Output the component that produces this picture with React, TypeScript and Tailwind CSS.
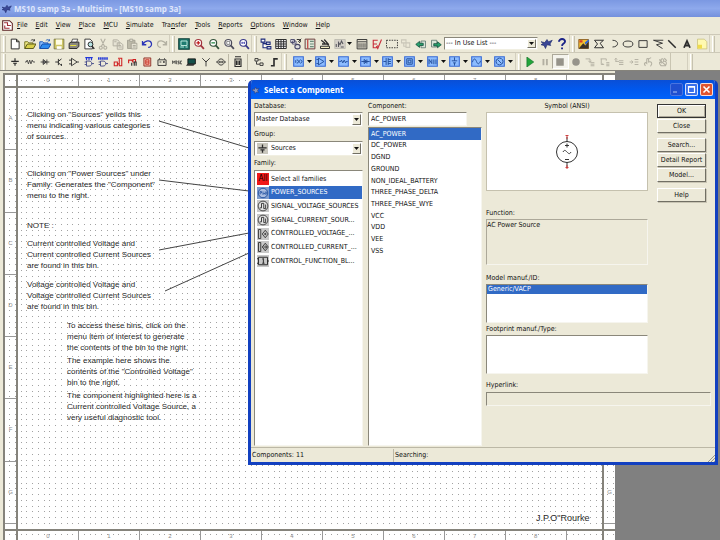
import React, { useState } from "react";
import clsx from "clsx";

const menus = ["File", "Edit", "View", "Place", "MCU", "Simulate", "Transfer", "Tools", "Reports", "Options", "Window", "Help"];
// index of the underlined accelerator letter
const accel: Record<string, number> = { Simulate: 0, Transfer: 3 };

const families = [
  { name: "Select all families", icon: "all" },
  { name: "POWER_SOURCES", icon: "power" },
  { name: "SIGNAL_VOLTAGE_SOURCES", icon: "signal" },
  { name: "SIGNAL_CURRENT_SOUR...", icon: "signal" },
  { name: "CONTROLLED_VOLTAGE_...", icon: "ctrlV" },
  { name: "CONTROLLED_CURRENT_...", icon: "ctrlI" },
  { name: "CONTROL_FUNCTION_BL...", icon: "block" },
];

const components = [
  "AC_POWER",
  "DC_POWER",
  "DGND",
  "GROUND",
  "NON_IDEAL_BATTERY",
  "THREE_PHASE_DELTA",
  "THREE_PHASE_WYE",
  "VCC",
  "VDD",
  "VEE",
  "VSS",
];

const columns = ["0", "1", "2", "3", "4", "5", "6", "7", "8"];
const rows = ["A", "B", "C", "D", "E", "F", "G"];

const notes = [
  { at: "left-[22px] top-[34px]", lines: ['Clicking on "Sources" yeilds this', "menu indicating various categories", "of sources."] },
  { at: "left-[22px] top-[93px]", lines: ['Clicking on "Power Sources" under', 'Family: Generates the "Component"', "menu to the right."] },
  { at: "left-[22px] top-[145px]", lines: ["NOTE :"] },
  { at: "left-[22px] top-[163px]", lines: ["Current controlled Voltage and", "Current controlled Current Sources", "are found in this bin."] },
  { at: "left-[22px] top-[204px]", lines: ["Voltage controlled Voltage and", "Voltage controlled Current Sources", "are found in this bin."] },
  { at: "left-[62px] top-[245px]", lines: ["To access these bins, click on the", "menu item of interest to generate", "the contents of the bin to the right."] },
  { at: "left-[62px] top-[280px]", lines: ["The example here shows the", 'contents of the "Controlled Voltage"', "bin to the right."] },
  { at: "left-[62px] top-[315px]", lines: ["The component highlighted here is a", "Current controlled Voltage Source, a", "very useful diagnostic tool."] },
];

const k = "#2c2c2c";
const navy = "#1c2a7a";
const off = "#b3b0a2";

const lens = (color: string, inner?: React.ReactNode) => (
  <>
    <circle cx="7" cy="6.5" r="4.5" fill="#fff" stroke={color} strokeWidth="1.6" />
    <path d="M10.5 10l4 4.5" stroke={color} strokeWidth="2.4" />
    {inner}
  </>
);

const glyphs: Record<string, React.ReactNode> = {
  new: <path d="M3 1.5h7l3.5 3.5v9.5H3zM10 1.5V5h3.5" fill="#fff" stroke={k} strokeWidth="1.3" />,
  open: (
    <>
      <path d="M1 14V5h4l1.5 1.5H12V9" fill="#f6ee8a" stroke="#6b6a1a" strokeWidth="1.2" />
      <path d="M1 14l3.5-6H16l-3.5 6z" fill="#d8cf4a" stroke="#4d4c12" strokeWidth="1.2" />
      <path d="M9 3.5c2-2 4-2 5 .5m0-2.5V4h-2.5" fill="none" stroke={k} />
    </>
  ),
  openBlue: (
    <>
      <path d="M1 14V5h4l1.5 1.5H12V9" fill="#8ec0ff" stroke="#1554b8" strokeWidth="1.2" />
      <path d="M1 14l3.5-6H16l-3.5 6z" fill="#2f8cf0" stroke="#0b46a4" strokeWidth="1.2" />
      <path d="M9 3.5c2-2 4-2 5 .5m0-2.5V4h-2.5" fill="none" stroke="#1554b8" />
    </>
  ),
  save: (
    <>
      <path d="M1.5 1.5h13v13h-13z" fill="#cfc766" stroke="#6d6b3c" />
      <path d="M4 2h8v7H4z" fill="#fffde4" />
      <path d="M5 11h6.5v3.5H5z" fill="#fff" />
    </>
  ),
  print: (
    <>
      <path d="M4.5 6L6 1.5h7L11.5 6z" fill="#fff" stroke={k} />
      <path d="M1.5 7L4 5.5h10.5V11L12 14H1.5z" fill="#8a8880" stroke={k} strokeWidth="1.3" />
      <path d="M3 10h8" stroke="#e8e040" strokeWidth="1.4" />
    </>
  ),
  preview: (
    <>
      <path d="M2.5 1.5h7l3 3v10h-10z" fill="#fff" stroke={k} strokeWidth="1.2" />
      <circle cx="10" cy="8.5" r="3.2" fill="#b7e4e4" stroke={k} strokeWidth="1.3" />
      <path d="M12 11l3 3.5" stroke={k} strokeWidth="2" />
    </>
  ),
  cut: <path d="M5 1l5 10M11 1L6 11M5 11a2 2 0 1 0 .1 0M11 11a2 2 0 1 0 .1 0" fill="none" stroke={off} strokeWidth="1.5" />,
  copy: <path d="M1.5 2.5h6l2 2v6h-8zM7 6.5h5L14.5 9v6H7zM3 5h3M9 10h3M9 12h4" fill="#e6e3d4" stroke={off} strokeWidth="1.3" />,
  paste: (
    <>
      <path d="M2 3h10v11H2z" fill="#bdbaa9" stroke="#9b988b" />
      <path d="M5 1.5h4v3H5zM7 7h7.5v7.5H7zM9 10h4M9 12h4" fill="#e6e3d4" stroke="#9b988b" />
    </>
  ),
  undo: <path d="M2 4v5h5M2.5 8.5C5 3 13 2 14 7.5c.5 3-2 5-4.500 5" fill="none" stroke="#2a34b8" strokeWidth="1.7" />,
  redo: <path d="M14 4v5H9M13.5 8.5C11 3 3 2 2 7.5c-.5 3 2 5 4.500 5" fill="none" stroke={off} strokeWidth="1.7" />,
  fullscreen: (
    <>
      <path d="M1 1h14v14H1z" fill="#1f7c70" stroke="#123f3a" strokeWidth="1.5" />
      <path d="M4 4h8v6H4zM3 12h5M10 12h3" fill="none" stroke="#c8efe4" strokeWidth="1.2" />
    </>
  ),
  zoomIn: lens("#a0323c", <path d="M7 4v5M4.5 6.5h5" stroke="#c01818" strokeWidth="1.6" />),
  zoomOut: lens("#33523c", <path d="M4.5 6.5h5" stroke="#18803a" strokeWidth="1.6" />),
  zoomArea: lens("#4a4a5a", <path d="M5 4.5h4v4H5z" fill="none" stroke="#666" />),
  zoomFit: lens("#39398a", <path d="M4.5 6.5h5M5.5 5v3M8.5 5v3" stroke="#3838a8" />),
  tree: <path d="M1.5 1.5h5v4h-5zM8.5 5.5h5v3h-5zM9.5 11.5h5v3h-5zM4 6v7h5M4 7.5h4" fill="#fff" stroke={navy} strokeWidth="1.4" />,
  grid: (
    <>
      <path d="M1 2h14v12H1z" fill="#fff" />
      <path d="M1 2h14v12H1zM1 5h14M1 8h14M1 11h14M4.5 2v12M8 2v12M11.5 2v12" fill="none" stroke={k} strokeWidth="1.3" />
    </>
  ),
  database: (
    <>
      <path d="M1 2h5v4H1zM3 4h5v4H3z" fill="#fff" stroke="#444466" strokeWidth="1.2" />
      <path d="M9 2h3a2 2 0 0 1 0 4M15 1l-4 4" fill="none" stroke={k} strokeWidth="1.3" />
      <ellipse cx="10" cy="11.5" rx="3.5" ry="3" fill="#ddd" stroke="#444466" strokeWidth="1.4" />
    </>
  ),
  erc: (
    <>
      <path d="M1.5 1.500h13v13h-13z" fill="#dfe8d8" stroke="#6a3b3b" strokeWidth="1.3" />
      <path d="M5 2v12" stroke="#c03030" strokeWidth="1.5" />
      <path d="M8 4.5h5M8 8h5M8 11.5h5" stroke="#6c8c7c" strokeWidth="1.5" />
    </>
  ),
  wizard: (
    <>
      <path d="M2 11h12v3H2z" fill="#f2ecc0" stroke={k} strokeWidth="1.3" />
      <path d="M3 3l5 4M7 2l6 7M4 8h7l2 2" fill="none" stroke={k} strokeWidth="1.7" />
    </>
  ),
  graph: (
    <>
      <path d="M1 2h14v12H1z" fill="#d4d0c8" stroke="#b7b4ab" />
      <path d="M3 12V8M6 12V6l2 3 2-5 2 4M9 12h4" fill="none" stroke="#55555c" strokeWidth="1.4" />
    </>
  ),
  calc: (
    <>
      <path d="M1.5 2h13v12.5h-13z" fill="#e4e0d0" stroke={k} strokeWidth="1.2" />
      <path d="M2 5h12M4 7v6M6.7 7v6M9.4 7v6M12 7v6" stroke={k} strokeWidth="1.1" />
    </>
  ),
  check: <path d="M9 3H3v5h5M3 8v5h4l2-3M7 11l2 3 5-12" fill="none" stroke="#c8303c" strokeWidth="1.5" />,
  marquee: <path d="M.7 3h14.6v10H.7z" fill="none" stroke={k} strokeWidth="1.2" strokeDasharray="2 1.4" />,
  transfer: <path d="M2 2.5h6v4H2zM8 6.5h5v6H8zM5 7v4h3" fill="none" stroke="#c9c6b8" strokeWidth="1.4" />,
  backAnn: (
    <>
      <path d="M8 4h6v9H8z" fill="#d8e4d8" stroke="#56706a" />
      <path d="M1 8.5l5-4v2.500h5v3H6v2.500z" fill="#27a06c" stroke="#124d3c" />
    </>
  ),
  fwdAnn: (
    <>
      <path d="M2 3h7v9H2z" fill="#d8e4d8" stroke="#56706a" />
      <path d="M15 9l-5-4v2.500H5v3h5V13z" fill="#27a06c" stroke="#124d3c" />
    </>
  ),
  bird: <path d="M0 5l5 1 3-4 2 3 5-2-3 5 1 2-5-1-2 5-2-4-4-1 3-2z" fill="#3a4796" stroke="#1b2668" strokeWidth=".8" />,
  help: (
    <>
      <path d="M4 5c0-5 8.500-4.500 8 0-.3 2.500-3.800 2.500-4 5.500" fill="none" stroke="#1c2488" strokeWidth="2.6" />
      <path d="M6.8 12.5h2.500V15H6.800z" fill="#1c2488" />
    </>
  ),
  picture: (
    <>
      <path d="M1 2h13v12H1z" fill="#f1c232" stroke="#7b4a10" />
      <path d="M1 14l6-7 3 3 4-6v10z" fill="#39302c" />
      <path d="M9 6l5-4 1 2-5 5z" fill="#2f62d8" />
      <path d="M2 3h4v3H2z" fill="#d83a2a" />
    </>
  ),
  polygon: <path d="M2 3h12L9.500 7 14 13H2l4-5z" fill="none" stroke={k} strokeWidth="1.3" />,
  arc: <path d="M6 3c9 0 9 9 0 9" fill="none" stroke={k} strokeWidth="1.2" />,
  ellipse: <ellipse cx="8" cy="8" rx="6.500" ry="4" fill="none" stroke={k} strokeWidth="1.2" />,
  rect: <path d="M2.500 3.500h11v9h-11z" fill="none" stroke={k} strokeWidth="1.2" />,
  polyline: <path d="M15 3H2l12 4-8 2 8 5" fill="none" stroke={k} strokeWidth="1.2" />,
  line: <path d="M3 3l10 10" stroke={k} strokeWidth="2" />,
  text: <path d="M4 13l4-9 4 9M6 10h4" fill="none" stroke={k} strokeWidth="2.4" />,
  note: (
    <>
      <path d="M2 1.500h9l3.500 3.500v9.500H2z" fill="#fff9b0" stroke="#c6be7c" />
      <path d="M2 9h6v5H2z" fill="#f0dc4c" />
    </>
  ),
  source: <path d="M8 2v4M2 7h12M5 10h6M8 10v4" stroke={k} strokeWidth="1.9" />,
  basic: <path d="M0 8h2l1.500-3 2 6 2-6 2 6 2-6L13 8h3" fill="none" stroke={k} strokeWidth="1.2" />,
  diode: <path d="M1 8h14M5 4v8l5-4zM11 4v8" fill="#999" stroke={k} strokeWidth="1.3" />,
  transistor: <path d="M2 8h5M7 3v10M7 7l5-4M7 9l5 5M12 14v-3" fill="none" stroke={k} strokeWidth="1.5" />,
  analog: <path d="M0 5h4M0 11h4M4 2v12l9-6zM13 8h3" fill="none" stroke={k} strokeWidth="1.4" />,
  ttl: (
    <>
      <path d="M2 1h12M4 1v4M8 1v4M12 1v4" stroke="#2338d8" strokeWidth="1.800" />
      <path d="M1 8h3M1 12h3M4 6.500h4c6 0 6 8 0 8H4zM12 10.500h4" fill="none" stroke="#333a80" strokeWidth="1.3" />
    </>
  ),
  cmos: (
    <>
      <path d="M0 2.500h16" stroke="#2338d8" strokeWidth="4" strokeDasharray="2.5 .8" />
      <path d="M1 8h3M1 12h3M4 6.500h4c6 0 6 8 0 8H4zM12 10.500h4" fill="none" stroke="#333a80" strokeWidth="1.3" />
    </>
  ),
  miscDigital: <path d="M2 14V8h5v6zM7 11h3M10 3v11h4V2H8" fill="none" stroke="#d02020" strokeWidth="1.7" />,
  mixed: (
    <>
      <path d="M1 10V5h5l2 3V4h4v4" fill="none" stroke="#d02020" strokeWidth="1.8" />
      <path d="M6 14V9M10 14V8h3v6" fill="none" stroke={k} strokeWidth="1.8" />
    </>
  ),
  indicator: (
    <>
      <path d="M3 1.500h11v13H3z" fill="#f3b4a4" stroke="#8a2a20" strokeWidth="1.4" />
      <path d="M6 4.500h5v7H6zM6 8h5" fill="none" stroke="#c02418" strokeWidth="1.3" />
    </>
  ),
  powerPart: <path d="M1.500 4.500h13v9h-13zM4 2v2M12 2v2M4 8h3M9.500 8h3M11 6.500v3" fill="none" stroke={k} strokeWidth="1.4" />,
  misc: <path d="M1 11V6l2 3 2-3v5M7 5.500v6M12 6.500H9.500v2h2V11H9M16 6.500h-2.500V11H16" fill="none" stroke={k} strokeWidth="1.200" />,
  mcuPart: (
    <>
      <path d="M3 3h12v8H3z" fill="#14504a" stroke="#111" strokeWidth="1.4" />
      <path d="M0 14l2-3h12l-2 3z" fill="#333" />
    </>
  ),
  rf: <path d="M8 15V6M2 2l6 6 6-6" fill="none" stroke={k} strokeWidth="1.4" />,
  motor: <path d="M0 8h3M13 8h3M6 6v4M10 6v4M6 8h4M8 3a5 5 0 1 0 .1 0" fill="none" stroke={k} strokeWidth="1.4" />,
  connector: <path d="M4 1h8M4 4h8v10H4zM6 6v6M8 6v6M10 6v6" fill="none" stroke={k} strokeWidth="1.5" />,
  hier: <path d="M1.500 2.500h5v4h-5zM9.500 9.500h5v4h-5zM4 7v4.500h5M7 4.500h4" fill="none" stroke={k} strokeWidth="1.4" />,
  bus: <path d="M3 14h5V3h6" fill="none" stroke={k} strokeWidth="2.6" />,
  play: <path d="M3 0l11 8-11 8z" fill="#22a53a" stroke="#15702a" />,
  pause: <path d="M4 3h3v10H4zM9.500 3h3v10h-3z" fill={off} />,
  stop: <path d="M2 2h12v12H2z" fill="#96938a" />,
  record: <circle cx="8" cy="8" r="6" fill="#96938a" />,
  stepInto: <path d="M1 3h7v5M5.500 6L8 9l2-3M9 9h6M9 11.500h6M9 14h6" fill="none" stroke={off} strokeWidth="1.500" />,
  stepOver: <path d="M1 3h9v3M2 3v9h4l-2-2M10 9h5M10 11.500h5M10 14h5" fill="none" stroke={off} strokeWidth="1.500" />,
  stepOut: <path d="M3 8V2M1 4l2-2 2 2M3 7h5M8 6h7M8 9h7M8 12h7" fill="none" stroke={off} strokeWidth="1.500" />,
  runTo: <path d="M1 8h5M4 5.500L6.500 8 4 10.500M9 4h6M9 8h6M9 12h6" fill="none" stroke={off} strokeWidth="1.500" />,
  hand: <path d="M4 14c-4-4 0-6 2-4V4c0-2 3-2 3 0v4c3-1 5 0 5 3l-2 4M9 3l4-2" fill="none" stroke={off} strokeWidth="1.700" />,
  hands: <path d="M5 14c-5-5-2-7 0-5V4c3-3 4 0 4 3 4-1 6 2 3 7zM2 4l10 9M10 2l4 4" fill="none" stroke={off} strokeWidth="1.700" />,
};

const blueParts: Record<string, string> = {
  "Power source": "M4 6v4M6 5l2 3-2 3M9 6v4M11 5l2 3-2 3",
  Analog: "M2 5h3M2 11h3M5 3v10l8-5z",
  Basic: "M2 8h2l1-2 2 4 2-4 2 4 1-2h2",
  Diode: "M2 8h12M6 5v6l4-3zM10 5v6",
  FET: "M2 8h4M6 3v10M9 3v10M9 5h4M9 11h4M9 8h4",
  "3D part": "M4 4h8v8H4zM6 6h4v4H6z",
  Measurement: "M3 12V5l4 6V5M10 5v7M13 5v7",
  Miscellaneous: "M8 2v5M4 7h8M6 10h4M8 10v4",
  Rated: "M2 9c2-6 4-6 6-1s4 4 6-1",
  Signal: "M8 3a5 5 0 1 0 .1 0M5 5l6 6",
};

const familyGlyphs: Record<string, React.ReactNode> = {
  power: (
    <>
      <circle cx="8" cy="8" r="6.300" fill="#a9bce0" stroke="#1f4f9f" strokeWidth="1.200" />
      <path d="M4 10V6h2v2H4M8 6v4l1.500-2L11 10V6M12.500 6v4" fill="none" stroke="#1f4f9f" />
    </>
  ),
  signal: (
    <>
      <circle cx="8" cy="8" r="6.500" fill="#e3e3e3" stroke={k} strokeWidth="1.100" />
      <path d="M3.500 10.500H6v-6h3v7h2.500V6" fill="none" stroke={k} strokeWidth="1.200" />
    </>
  ),
  ctrlV: <path d="M2 2h3v12H2zM11 3l4 5-4 5-4-5zM9.500 8h3M11 6.500v3" fill="none" stroke={k} strokeWidth="1.100" />,
  ctrlI: <path d="M2 2h3v12H2zM11 3l4 5-4 5-4-5zM8.500 8h4M11 6l2 2-2 2" fill="none" stroke={k} strokeWidth="1.200" />,
  block: <path d="M2 3h12v10H2zM0 5h2M0 11h2M14 8h2M7 5.500l1.500-1V11M7 11h3" fill="none" stroke={k} strokeWidth="1.300" />,
};

const Glyph = ({ children, className = "size-3" }: { children: React.ReactNode; className?: string }) => (
  <svg viewBox="0 0 16 16" className={clsx("shrink-0", className)} aria-hidden="true">
    {children}
  </svg>
);

const ToolGroup = ({ names, className, small }: { names: string; className: string; small?: boolean }) => (
  <div className={clsx("flex shrink-0 items-center", className)}>
    {names.split(" ").map((name) => (
      <button
        key={name}
        type="button"
        aria-label={name}
        className={clsx("flex h-[15px] flex-1 items-center justify-center", name === "stop" && "border border-[#aca899] border-r-white border-b-white bg-[#f4f3ec]")}
      >
        <Glyph className={small ? "size-[10px]" : "size-3"}>{glyphs[name]}</Glyph>
      </button>
    ))}
  </div>
);

const Grip = () => (
  <div className="flex h-full w-2 shrink-0 items-center justify-center gap-px border-l border-[#d3cfbe]">
    <span className="h-4 w-px bg-white" />
    <span className="h-4 w-px bg-[#c6c2b0]" />
  </div>
);

const Down = () => (
  <svg viewBox="0 0 5 3" className="h-[3px] w-[5px] shrink-0" aria-hidden="true">
    <path d="M0 0h5L2.500 3z" fill="#111" />
  </svg>
);

const Drop = ({ id, value, label, className, children }: { id: string; value: string; label?: string; className: string; children?: React.ReactNode }) => (
  <div className="relative">
    <select id={id} aria-label={label} defaultValue={value} className={clsx("block w-full appearance-none border border-[#8a877a] border-r-[#f1efe2] border-b-[#f1efe2] bg-white outline-none", className)}>
      <option>{value}</option>
    </select>
    {children}
    <span className="pointer-events-none absolute inset-y-[2px] right-[2px] flex w-[9px] items-center justify-center border border-white border-r-[#716f64] border-b-[#716f64] bg-[#ece9d8]">
      <Down />
    </span>
  </div>
);

const ColumnRuler = ({ edge }: { edge: string }) => (
  <div className={clsx("box-content flex h-[11px] border-[#85837b] text-[6px] leading-[11px] text-[#8a8a8a]", edge)}>
    <div className="w-[11px] shrink-0" />
    <div className="flex flex-1 border-x-2 border-[#85837b] text-center">
      {columns.map((c) => (
        <div key={c} className="flex-[17] border-r border-[#999]">
          {c}
        </div>
      ))}
      <div className="flex-[10]" />
    </div>
    <div className="w-[11px] shrink-0" />
  </div>
);

const RowRuler = () => (
  <div className="flex w-[11px] shrink-0 flex-col text-center text-[6px] text-[#8a8a8a]">
    {rows.map((r) => (
      <div key={r} className="flex flex-[12] items-center justify-center border-b border-[#999]">
        {r}
      </div>
    ))}
    <div className="flex-1" />
  </div>
);

const Sheet = () => (
  <div className="relative h-[470px] w-[612px] border-t-2 border-l-2 border-[#85837b] bg-white">
    <svg className="absolute inset-0 h-full w-full" aria-hidden="true">
      <defs>
        <pattern id="dots" x="4" y="5" width="23" height="23" patternUnits="userSpaceOnUse">
          {[0, 6, 12, 17].map((y) => [0, 6, 12, 17].map((x) => <rect key={`${x}-${y}`} x={x} y={y} width="1" height="1" fill="#a2a2a2" />))}
        </pattern>
      </defs>
      <rect width="100%" height="100%" fill="url(#dots)" />
      <path d="M154 46L244 73M154 105L244 116M154 175L244 158M160 216L244 178" stroke="#444" fill="none" />
    </svg>
    <div className="relative flex h-full flex-col">
      <ColumnRuler edge="border-b-2" />
      <div className="flex h-[441px]">
        <RowRuler />
        <div className="flex-1 border-x-2 border-[#85837b]" />
        <RowRuler />
      </div>
      <ColumnRuler edge="border-t-2" />
    </div>
    {notes.map((n) => (
      <p key={n.at} className={clsx("absolute text-[8px] leading-[11px] whitespace-nowrap text-[#2a2a2a]", n.at)}>
        {n.lines.map((l) => (
          <span key={l} className="block">
            {l}
          </span>
        ))}
      </p>
    ))}
    <p className="absolute top-[438px] left-[531px] text-[9px] leading-[11px] text-[#2a2a2a]">J.P.O"Rourke</p>
  </div>
);

const DialogButton = ({ children, primary }: { children: string; primary?: boolean }) => (
  <button
    type="button"
    className={clsx(
      "h-[14px] w-full border bg-[#ece9d8] leading-[11px] whitespace-nowrap",
      primary ? "border-[#333] shadow-[inset_1px_1px_0_#fff,inset_-1px_-1px_0_#aca899]" : "border-white border-r-[#716f64] border-b-[#716f64] shadow-[1px_1px_0_#c9c5b4]"
    )}
  >
    {children}
  </button>
);

const box = "border border-[#8a877a] border-r-[#f6f5ee] border-b-[#f6f5ee]";

const SelectDialog = () => {
  const [family, setFamily] = useState("POWER_SOURCES");
  const [component, setComponent] = useState("AC_POWER");

  return (
    <section
      role="dialog"
      aria-labelledby="dialog-title"
      className="absolute top-[9px] right-[2px] left-[248px] flex h-[385px] flex-col overflow-hidden rounded-t-[5px] border-[3px] border-t-0 border-[#1240c0] bg-[#ece9d8] font-['DejaVu_Sans_Condensed','DejaVu_Sans',sans-serif]"
    >
      <header className="-mx-[3px] flex h-[19px] shrink-0 items-center gap-1 bg-linear-to-b from-[#0a4fd6] via-[#0058ee] to-[#0062fa] pr-[5px] pl-1">
        <Glyph className="size-2">
          <path d="M1 6l4 1 2-5 2 4 5-1-3 4 2 4-4-1-3 3-1-4-4-2z" fill="#8c9ac0" stroke="#2c3768" />
        </Glyph>
        <h2 id="dialog-title" className="flex-1 font-['Open_Sans','Noto_Sans',sans-serif] text-[8px] leading-[11px] font-bold text-white">
          Select a Component
        </h2>
        <div className="flex gap-[2px]">
          <button type="button" aria-label="Minimize" className="size-[13px] rounded-[2px] border border-[#4a74e0] bg-[#1f4fd0]">
            <svg viewBox="0 0 11 11" aria-hidden="true">
              <path d="M2 8h4" stroke="#7f9ce8" strokeWidth="1.500" />
            </svg>
          </button>
          <button type="button" aria-label="Maximize" className="size-[13px] rounded-[2px] border border-white/80 bg-[#3a70ea]">
            <svg viewBox="0 0 11 11" aria-hidden="true">
              <path d="M2.500 2.500h6v6h-6zM2 3.200h7" fill="none" stroke="#fff" strokeWidth="1.200" />
            </svg>
          </button>
          <button type="button" aria-label="Close window" className="size-[13px] rounded-[2px] border border-white/80 bg-[#df5430]">
            <svg viewBox="0 0 11 11" aria-hidden="true">
              <path d="M2.500 2.500l6 6M8.500 2.500l-6 6" stroke="#fff" strokeWidth="1.600" />
            </svg>
          </button>
        </div>
      </header>

      <div className="flex min-h-0 flex-1 gap-1 pt-px pr-[4px] pb-px pl-[3px]">
        <div className="flex w-[109px] shrink-0 flex-col">
          <label htmlFor="database" className="h-3 leading-[12px]">
            Database:
          </label>
          <Drop id="database" value="Master Database" className="h-[15px] px-px" />
          <label htmlFor="group" className="mt-[2px] h-3 leading-[11px]">
            Group:
          </label>
          <Drop id="group" value="Sources" className="h-[15px] pl-4">
            <span className="pointer-events-none absolute top-[2px] left-[3px] bg-[#c9c7bd]">
              <Glyph className="size-[11px]">{glyphs.source}</Glyph>
            </span>
          </Drop>
          <span id="family-label" className="mt-[2px] h-3 leading-[11px]">
            Family:
          </span>
          <div className={clsx("flex-1 bg-white pt-px pl-[2px]", box)}>
            <ul role="listbox" aria-labelledby="family-label" className="flex h-24 flex-col">
              {families.map((f) => (
                <li key={f.name} role="option" aria-selected={family === f.name} onClick={() => setFamily(f.name)} className="flex min-h-0 flex-1 items-center">
                  {f.icon === "all" ? (
                    <span className="flex size-3 shrink-0 items-center justify-center overflow-hidden bg-[#f01818] text-[8px] leading-[12px] text-black">All</span>
                  ) : (
                    <Glyph className={clsx("size-3", family === f.name ? "bg-[#7f9ccc]" : "bg-[#c8c8c8]")}>{familyGlyphs[f.icon]}</Glyph>
                  )}
                  <span className={clsx("flex h-full flex-1 items-center pl-[2px] whitespace-nowrap", family === f.name && "bg-[#316ac5] text-white")}>{f.name}</span>
                </li>
              ))}
            </ul>
          </div>
        </div>

        <div className="flex w-[115px] shrink-0 flex-col pl-px">
          <label htmlFor="component" className="h-3 leading-[12px]">
            Component:
          </label>
          <input id="component" value={component} onChange={(e) => setComponent(e.target.value)} className={clsx("h-[14px] w-[99px] bg-white px-[2px] outline-none", box)} />
          <div className={clsx("mt-px flex-1 bg-white", box)}>
            <ul role="listbox" aria-label="Components" className="flex h-[129px] flex-col">
              {components.map((c) => (
                <li key={c} role="option" aria-selected={component === c} onClick={() => setComponent(c)} className={clsx("flex min-h-0 flex-1 items-center pl-[2px]", component === c && "bg-[#316ac5] text-white")}>
                  {c}
                </li>
              ))}
            </ul>
          </div>
        </div>

        <div className="flex min-w-0 flex-1 flex-col">
          <div className="flex gap-[9px]">
            <div className="flex min-w-0 flex-1 flex-col">
              <span className="h-3 text-center leading-[12px]">Symbol (ANSI)</span>
              <div className="flex h-[79px] items-center justify-center border border-[#c5c1ae] bg-white">
                <svg viewBox="0 0 24 36" className="h-9 w-6" aria-label="AC power source symbol">
                  <circle cx="12" cy="18" r="10.500" fill="none" stroke="#333" />
                  <path d="M12 3v5M12 28v5M10 11.500h4M12 9.500v4M10 25.500h4M8 18c1.500-3 3-1 4 0s2.500 3 4 0" fill="none" stroke="#333" />
                  <path d="M10.500 1.500h3M12 1v4M12 31v4M10.500 33.500h3" stroke="#d04040" />
                </svg>
              </div>
              <label htmlFor="function" className="mt-4 h-3 leading-[12px]">
                Function:
              </label>
              <textarea id="function" readOnly value="AC Power Source" className="block h-[46px] resize-none border border-[#aca899] border-r-[#f6f5ee] border-b-[#f6f5ee] bg-transparent leading-[10px] outline-none" />
              <span id="model-label" className="mt-[7px] h-3 leading-[12px]">
                Model manuf./ID:
              </span>
              <ul role="listbox" aria-labelledby="model-label" className={clsx("h-[39px] bg-white", box)}>
                <li role="option" aria-selected="true" className="bg-[#316ac5] pl-px leading-[9px] text-white">
                  Generic/VACP
                </li>
              </ul>
              <span id="footprint-label" className="h-3 leading-[12px]">
                Footprint manuf./Type:
              </span>
              <ul role="listbox" aria-labelledby="footprint-label" className={clsx("h-[39px] bg-white", box)} />
            </div>
            <div className="mr-[5px] flex w-[49px] shrink-0 flex-col gap-px pt-1">
              <DialogButton primary>OK</DialogButton>
              <DialogButton>Close</DialogButton>
              <div className="mt-1 mb-[5px] flex flex-col gap-px">
                <DialogButton>Search...</DialogButton>
                <DialogButton>Detail Report</DialogButton>
                <DialogButton>Model...</DialogButton>
              </div>
              <DialogButton>Help</DialogButton>
            </div>
          </div>
          <label htmlFor="hyperlink" className="mt-[6px] h-3 leading-[11px]">
            Hyperlink:
          </label>
          <input id="hyperlink" readOnly className={clsx("h-[14px] w-full bg-transparent outline-none", box)} />
        </div>
      </div>

      <footer className="flex h-[15px] shrink-0 items-center border-t border-[#bcb8a6]">
        <span className="w-[142px] pl-px">Components: 11</span>
        <span className="flex-1 border-l border-[#bcb8a6] pl-px leading-[13px]">Searching:</span>
        <svg viewBox="0 0 8 8" className="size-2 self-end" aria-hidden="true">
          <path d="M1 8l7-7M4 8l4-4M7 8l1-1" stroke="#9c9988" />
        </svg>
      </footer>
    </section>
  );
};

const App = () => {
  return (
    <div className="flex h-screen flex-col overflow-hidden bg-[#ece9d8] font-['DejaVu_Sans_Condensed','DejaVu_Sans',sans-serif] text-[7px] text-[#111]">
      <header className="flex h-[17px] shrink-0 items-center gap-[2px] bg-linear-to-b from-[#7b98e2] via-[#8ea9ec] to-[#7490dc] pl-[2px]">
        <Glyph className="size-[10px]">{glyphs.bird}</Glyph>
        <h1 className="font-['Open_Sans','Noto_Sans',sans-serif] text-[8px] leading-[11px] font-bold whitespace-nowrap text-[#dfe6fb]">MS10 samp 3a - Multisim - [MS10 samp 3a]</h1>
      </header>

      <nav className="flex h-[17px] shrink-0 items-center gap-2 pl-[2px]">
        <Glyph className="-mr-1 size-[11px]">
          <path d="M1 1h10l4 4v10H1z" fill="#fff" stroke="#5a2020" strokeWidth="1.500" />
          <path d="M3 4h5v4h5M4 8v4h7" fill="none" stroke="#a03038" strokeWidth="1.600" />
        </Glyph>
        {menus.map((m) => {
          const i = accel[m] ?? 0;
          return (
            <button key={m} type="button">
              {m.slice(0, i)}
              <span className="underline">{m[i]}</span>
              {m.slice(i + 1)}
            </button>
          );
        })}
      </nav>

      <div className="flex h-[18px] shrink-0 items-center border-t border-[#cdc9b8]">
        <Grip />
        <ToolGroup className="w-[161px]" names="new open openBlue save print preview cut copy paste undo redo" />
        <Grip />
        <ToolGroup className="w-[74px]" names="fullscreen zoomIn zoomOut zoomArea zoomFit" />
        <Grip />
        <ToolGroup className="w-[88px]" names="tree grid database erc wizard graph" />
        <span className="mr-[3px]">
          <Down />
        </span>
        <ToolGroup className="w-[88px]" names="calc check marquee transfer backAnn fwdAnn" />
        <div className="mx-px w-[94px] shrink-0">
          <Drop id="in-use" label="In use list" value="--- In Use List ---" className="h-[13px] pl-px" />
        </div>
        <ToolGroup className="w-[30px]" names="bird help" />
        <Grip />
        <ToolGroup className="w-[132px]" names="picture polygon arc ellipse rect polyline line text note" />
        <Grip />
      </div>

      <div className="flex h-[18px] shrink-0 items-center border-t border-[#cdc9b8]">
        <Grip />
        <ToolGroup small className="w-[220px]" names="source basic diode transistor analog ttl cmos miscDigital mixed indicator powerPart misc mcuPart rf motor" />
        <span className="h-4 w-px bg-[#bcb8a6]" />
        <ToolGroup className="w-[18px]" names="connector" />
        <span className="mr-1 h-4 w-px bg-[#bcb8a6]" />
        <ToolGroup small className="w-[29px]" names="hier bus" />
        <Grip />
        <div className="flex w-[226px] shrink-0 pl-[3px]">
          {Object.entries(blueParts).map(([name, d]) => (
            <button key={name} type="button" aria-label={name} className="flex flex-1 items-center gap-[3px] pl-px">
              <Glyph className="size-[11px]">
                <path d="M1 1h14v14H1z" fill="#8cbcff" stroke="#3a6cd4" strokeWidth="1.600" />
                <path d={d} fill="none" stroke="#24509c" strokeWidth="1.400" />
              </Glyph>
              <Down />
            </button>
          ))}
        </div>
        <Grip />
        <ToolGroup small className="w-[147px]" names="play pause stop record stepInto stepOver stepOut runTo hand hands" />
        <div className="h-full flex-1 border-l border-[#c9c5b2] pl-4">
          <Grip />
        </div>
      </div>

      <main className="relative min-h-0 flex-1 border-t border-[#85837b] bg-[#808080] font-['Liberation_Sans',Arial,sans-serif]">
        <div className="h-full overflow-hidden">
          <div className="w-[615px] bg-[#ece9d8] pt-[2px] pl-[3px]">
            <Sheet />
          </div>
        </div>
        <SelectDialog />
      </main>
    </div>
  );
};

export default App;
